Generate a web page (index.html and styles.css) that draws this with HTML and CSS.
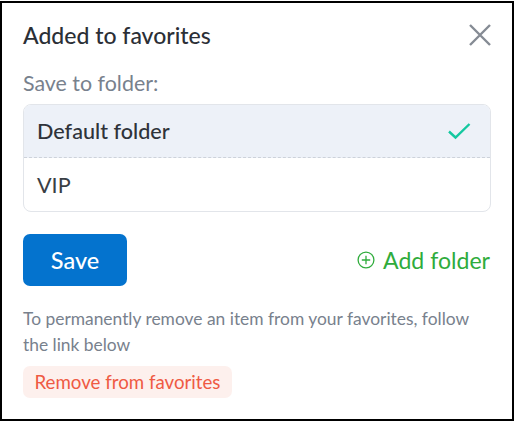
FILE: index.html
```html
<!DOCTYPE html>
<html lang="en">

<head>
    <meta charset="UTF-8">
    <meta name="viewport" content="width=device-width, initial-scale=1.0">
    <title>Added to favorites</title>
    <link rel="stylesheet" href="styles.css">
</head>

<body>
    <div class="modal">
        <div class="modal_head">
            <h2>Added to favorites</h2>
            <button type="button" class="close" aria-label="Close">
                <svg width="22" height="22" viewBox="0 0 22 22" fill="none" stroke="#858b94" stroke-width="2.4">
                    <path d="M1 1 L21 21 M21 1 L1 21" />
                </svg>
            </button>
        </div>
        <div class="label">Save to folder:</div>
        <div class="folders">
            <div class="folder selected">
                <span>Default folder</span>
                <svg width="24" height="18" viewBox="0 0 24 18" fill="none" stroke="#14c8a0" stroke-width="2.4">
                    <path d="M2 9.5 L8.5 15.5 L22.5 2" />
                </svg>
            </div>
            <div class="folder">VIP</div>
        </div>
        <div class="actions">
            <button type="button" class="save">Save</button>
            <a href="#" class="add">
                <svg width="18" height="18" viewBox="0 0 18 18" fill="none" stroke="#2fac3c" stroke-width="1.3">
                    <circle cx="9" cy="9" r="7.9" />
                    <path d="M9 4.8 V13.2 M4.8 9 H13.2" />
                </svg>
                Add folder
            </a>
        </div>
        <p class="note">To permanently remove an item from your favorites, follow the link below</p>
        <a href="#" class="remove">Remove from favorites</a>
    </div>
</body>

</html>
```
FILE: styles.css
```css
* {
    margin: 0;
    padding: 0;
    box-sizing: border-box;
}

body {
    width: 515px;
    height: 422px;
    padding-top: 1px;
    background-color: #fff;
    font-family: "Lato", "Open Sans", sans-serif;
    overflow: hidden;
}

.modal {
    width: 514px;
    height: 420px;
    padding: 18px 21px 0 21px;
    background-color: #fff;
    border: 2px solid #000;
}

.modal_head {
    display: flex;
    justify-content: space-between;
    align-items: center;
    height: 28px;
}

.modal_head h2 {
    font-size: 23px;
    font-weight: 500;
    color: #2b2f36;
}

.close {
    background: none;
    border: none;
    display: flex;
}

.label {
    margin-top: 21px;
    font-size: 21.4px;
    line-height: 26px;
    color: #78818d;
}

.folders {
    margin-top: 8px;
    height: 108px;
    border: 1px solid #e2e5ea;
    border-radius: 8px;
    overflow: hidden;
}

.folder {
    height: 53px;
    padding: 0 19px 0 13px;
    display: flex;
    justify-content: space-between;
    align-items: center;
    font-size: 21.6px;
    color: #3a3e45;
}

.folder.selected {
    background-color: #edf1f8;
    border-bottom: 1px dashed #cdd2da;
    font-weight: 500;
    color: #2f333a;
}

.actions {
    margin-top: 22px;
    display: flex;
    justify-content: space-between;
    align-items: center;
}

.save {
    width: 104px;
    height: 52px;
    background-color: #0473ce;
    color: #fff;
    border: none;
    border-radius: 7px;
    font-family: inherit;
    font-size: 23.5px;
    font-weight: 500;
}

.add {
    display: flex;
    align-items: center;
    gap: 8px;
    margin-right: 1px;
    font-size: 23.1px;
    color: #2fac3c;
    text-decoration: none;
}

.note {
    margin-top: 20px;
    font-size: 17.4px;
    line-height: 26px;
    color: #78818d;
}

.remove {
    display: inline-block;
    margin-top: 8px;
    padding: 0 11.5px;
    height: 32px;
    line-height: 32px;
    border-radius: 7px;
    background-color: #fdf0ed;
    color: #ef5a43;
    font-size: 18.7px;
    text-decoration: none;
}
```
